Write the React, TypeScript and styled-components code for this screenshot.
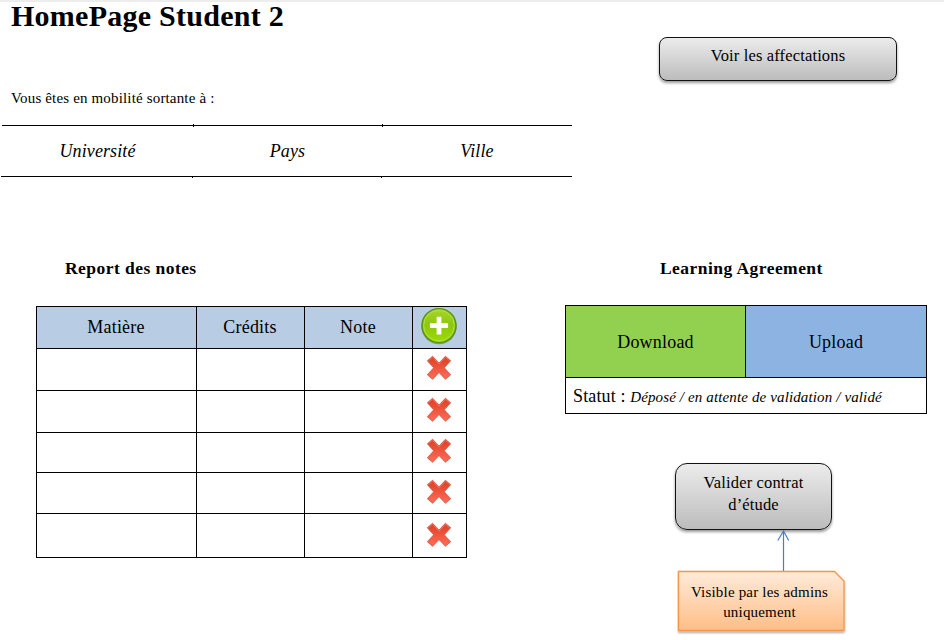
import React from "react";
import styled, { createGlobalStyle } from "styled-components";

const GlobalStyle = createGlobalStyle`
  *, *::before, *::after { box-sizing: border-box; }
  html, body { margin: 0; padding: 0; background: #fff; }
  body { color: #000; font-family: "Liberation Serif", "Times New Roman", serif; }
`;

const Page = styled.main`
  width: 944px;
  height: 640px;
  overflow: hidden;
  border-top: 2px solid #ededed;
`;

const TopSection = styled.header`
  display: grid;
  grid-template-columns: 572px 1fr;
  height: 255px;
`;

const BottomSection = styled.div`
  display: grid;
  grid-template-columns: 565px 1fr;
`;

const Column = styled.section`
  display: flex;
  flex-direction: column;
  align-items: flex-start;
`;

const Title = styled.h1`
  margin: -4px 0 0 11px;
  font-size: 30px;
  line-height: 36px;
  letter-spacing: 0.26px;
  white-space: nowrap;
`;

const Intro = styled.p`
  margin: 54px 0 0 11px;
  font-size: 15px;
  line-height: 20px;
  letter-spacing: 0.16px;
  white-space: nowrap;
`;

const Destination = styled.div`
  display: grid;
  grid-template-columns: 192px 189px 190px;
  width: 571px;
  height: 54px;
  margin: 16px 0 0 1px;
`;

const DestinationCell = styled.div`
  position: relative;
  display: flex;
  flex-direction: column;
  font-size: 18px;
  font-style: italic;
  line-height: 50px;
  letter-spacing: 0.12px;
  text-align: center;

  &::before {
    content: "";
    height: 1px;
    margin-top: 1px;
    background: #000;
  }
  &:first-child { text-indent: 1px; }
  &:first-child::before { margin-left: 1px; }
  &::after {
    content: "";
    height: 1px;
    background: #000;
  }
`;

const Tick = styled.i<{ $bottom?: boolean }>`
  position: absolute;
  width: 1px;
  height: ${(p) => (p.$bottom ? 2 : 3)}px;
  right: ${(p) => (p.$bottom ? 0 : -1)}px;
  top: ${(p) => (p.$bottom ? 52 : 0)}px;
  background: #000;
`;

const SoftButton = styled.button<{ $w: number; $h: number; $r: number; $top: number }>`
  width: ${(p) => p.$w}px;
  height: ${(p) => p.$h}px;
  padding: ${(p) => p.$top}px 0 0;
  display: flex;
  flex-direction: column;
  align-items: center;
  border: 1.5px solid #111;
  border-radius: ${(p) => p.$r}px;
  background: linear-gradient(#ececec, #bcbcbc);
  box-shadow: 0 2px 3px rgba(0, 0, 0, 0.4);
  color: #000;
  font: 16.5px/22px "Liberation Serif", "Times New Roman", serif;
  letter-spacing: 0.15px;
`;

const AssignmentsSlot = styled.div`
  padding: 35px 0 0 87px;
`;

const SectionTitle = styled.h2<{ $indent: number; $gap: number }>`
  margin: 0 0 ${(p) => p.$gap}px ${(p) => p.$indent}px;
  font-size: 17.5px;
  line-height: 23px;
  padding-bottom: 1px;
  letter-spacing: 0.45px;
  white-space: nowrap;
`;

const Grades = styled.div`
  display: grid;
  grid-template-columns: 160px 108px 108px 54px;
  grid-template-rows: 42px 42px 42px 40px 41px 44px;
  width: 431px;
  margin-left: 36px;
  border-top: 1px solid #000;
  border-left: 1px solid #000;
`;

const GradeCell = styled.div<{ $head?: boolean; $lift?: number }>`
  display: flex;
  align-items: center;
  justify-content: center;
  border-right: 1px solid #000;
  border-bottom: 1px solid #000;
  padding: 0 1px ${(p) => (p.$lift ?? 0) * 2}px 0;
  background: ${(p) => (p.$head ? "#b8cce4" : "#fff")};
  font-size: 18px;
  letter-spacing: 0.2px;
  svg { display: block; flex: none; }
`;

const Agreement = styled.div`
  display: grid;
  grid-template-columns: 180px 181px;
  grid-template-rows: 72px 36px;
  width: 362px;
  border-top: 1px solid #000;
  border-left: 1px solid #000;
`;

const AgreementAction = styled.button<{ $color: string }>`
  border: 0 solid #000;
  border-width: 0 1px 1px 0;
  border-radius: 0;
  padding: 0;
  background: ${(p) => p.$color};
  color: #000;
  font: 18px/22px "Liberation Serif", "Times New Roman", serif;
  letter-spacing: 0.2px;
`;

const Status = styled.div`
  grid-column: 1 / -1;
  padding: 0 0 0 7px;
  border-right: 1px solid #000;
  border-bottom: 1px solid #000;
  font-size: 18px;
  line-height: 36px;
  letter-spacing: 0.13px;
  white-space: nowrap;
  em { font-size: 15px; }
`;

const Flow = styled.div`
  width: 170px;
  margin: 49px 0 0 110px;
  display: flex;
  flex-direction: column;
`;

const NoteBox = styled.div`
  display: grid;
  width: 170px;
  height: 65px;
  margin: -1px 0 0 2px;
  > * { grid-area: 1 / 1; }
`;

const NoteText = styled.div`
  z-index: 1;
  width: 165px;
  padding-top: 12px;
  font-size: 15px;
  line-height: 20px;
  letter-spacing: 0.19px;
  text-align: center;
`;

const ArrowSlot = styled.div`
  height: 41px;
  padding-left: 101px;
  svg { display: block; }
`;

const AddIcon = () => (
  <svg width="38" height="38" viewBox="0 0 38 38">
    <defs>
      <linearGradient id="addFill" x1="0" y1="0" x2="0" y2="1">
        <stop offset="0" stopColor="#a9d52c" />
        <stop offset=".48" stopColor="#8cc80c" />
        <stop offset="1" stopColor="#9cdc00" />
      </linearGradient>
    </defs>
    <ellipse cx="19" cy="20" rx="17.6" ry="17.2" fill="#47721c" opacity=".55" />
    <circle cx="19" cy="18.6" r="17" fill="url(#addFill)" stroke="#579612" strokeWidth="1.4" />
    <circle cx="19" cy="18.6" r="15.3" fill="none" stroke="#b5dc50" strokeWidth="1" />
    <path d="M17.2 10.3h3.6v6.5h6.7v3.6h-6.7v6.5h-3.6v-6.5h-6.7v-3.6h6.7z" fill="#fff" stroke="#fff" strokeWidth="1.2" strokeLinejoin="round" />
  </svg>
);

const DeleteIcon = () => (
  <svg width="28" height="28" viewBox="0 0 28 28">
    <defs>
      <linearGradient id="deleteFill" x1="0" y1="0" x2="0" y2="1">
        <stop offset="0" stopColor="#dc3e22" />
        <stop offset="1" stopColor="#ff6d5b" />
      </linearGradient>
    </defs>
    <path d="M7.6 3.2 14 9.6l6.4-6.4 5.2 4.4-6.2 7 6.2 7-5.2 4.4-6.4-6.2-6.4 6.2-5.2-4.4 6.2-7-6.2-7z" fill="#777" opacity=".25" />
    <path d="M7.6 2.2 14 9l6.4-6.8 5.3 4.5-6.4 7 6.4 7-5.3 4.5-6.4-6.8-6.4 6.8-5.3-4.5 6.4-7-6.4-7z" fill="url(#deleteFill)" stroke="#d4503c" strokeWidth=".7" strokeLinejoin="round" />
    <path d="M3.4 6.8 7.5 3.3 14 10.2l6.5-6.9 4 3.5" fill="none" stroke="#f59a88" strokeWidth=".5" />
  </svg>
);

const Arrow = () => (
  <svg width="14" height="41" viewBox="0 0 14 41" fill="none" stroke="#4a7ebb" strokeWidth="1.2">
    <path d="M7.5 1v40M1.8 10.5 7.5 1l5.2 9.5" />
  </svg>
);

const NoteShape = () => (
  <svg width="170" height="65" viewBox="0 0 170 65">
    <defs>
      <linearGradient id="noteFill" x1="0" y1="0" x2="0" y2="1">
        <stop offset="0" stopColor="#ffebdb" />
        <stop offset="1" stopColor="#ffbe86" />
      </linearGradient>
      <filter id="noteShadow" x="-5%" y="-10%" width="110%" height="125%">
        <feDropShadow dx="0" dy="1.5" stdDeviation="1" floodOpacity=".38" />
      </filter>
    </defs>
    <path d="M1.5 1.5h156l9.5 9.5v49.5H1.5z" fill="url(#noteFill)" stroke="#f79646" strokeWidth="1.3" filter="url(#noteShadow)" />
  </svg>
);

const places = ["Université", "Pays", "Ville"];
const headings = ["Matière", "Crédits", "Note"];
const rowLifts = [2, 2, 2, 1, 1];

export default function App() {
  return (
    <>
      <GlobalStyle />
      <Page>
        <TopSection>
          <Column>
            <Title>HomePage Student 2</Title>
            <Intro>Vous êtes en mobilité sortante à :</Intro>
            <Destination>
              {places.map((place, i) => (
                <DestinationCell key={place}>
                  {place}
                  {i < 2 && <Tick />}
                  {i < 2 && <Tick $bottom />}
                </DestinationCell>
              ))}
            </Destination>
          </Column>
          <AssignmentsSlot>
            <SoftButton $w={238} $h={44} $r={8} $top={7}>Voir les affectations</SoftButton>
          </AssignmentsSlot>
        </TopSection>
        <BottomSection>
          <Column>
            <SectionTitle $indent={65} $gap={25}>Report des notes</SectionTitle>
            <Grades>
              {headings.map((heading) => (
                <GradeCell $head key={heading}>{heading}</GradeCell>
              ))}
              <GradeCell $head $lift={1.5}><AddIcon /></GradeCell>
              {rowLifts.map((lift, row) => (
                <React.Fragment key={row}>
                  <GradeCell />
                  <GradeCell />
                  <GradeCell />
                  <GradeCell $lift={lift}><DeleteIcon /></GradeCell>
                </React.Fragment>
              ))}
            </Grades>
          </Column>
          <Column>
            <SectionTitle $indent={95} $gap={24}>Learning Agreement</SectionTitle>
            <Agreement>
              <AgreementAction $color="#92d050">Download</AgreementAction>
              <AgreementAction $color="#8db3e2">Upload</AgreementAction>
              <Status>Statut : <em>Déposé / en attente de validation / validé</em></Status>
            </Agreement>
            <Flow>
              <SoftButton $w={157} $h={67} $r={12} $top={8}>
                <span>Valider contrat</span>
                <span>d’étude</span>
              </SoftButton>
              <ArrowSlot><Arrow /></ArrowSlot>
              <NoteBox>
                <NoteShape />
                <NoteText>Visible par les admins<br />uniquement</NoteText>
              </NoteBox>
            </Flow>
          </Column>
        </BottomSection>
      </Page>
    </>
  );
}
